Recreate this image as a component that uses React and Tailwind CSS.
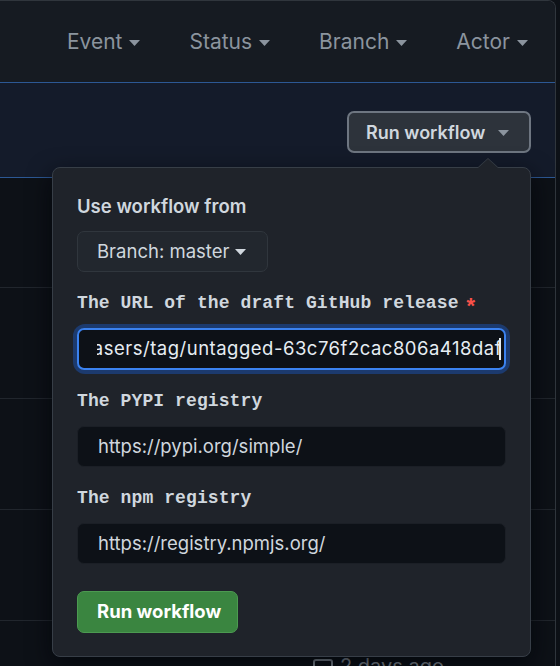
import React from 'react'

const sans = { fontFamily: 'Inter, "Liberation Sans", sans-serif' }

function Caret({ className = '' }) {
  return (
    <svg width="11" height="6" viewBox="0 0 11 6" className={className}>
      <path d="M0 0h11L5.5 6z" fill="currentColor" />
    </svg>
  )
}

function Field({ label, value, required, focused }) {
  return (
    <div>
      <div className="h-6 flex items-center text-[18px] font-bold text-[#d0d7de] leading-6 font-['Liberation_Mono',monospace] tracking-[0.1px]">
        {label}
        {required && <span className="ml-[8px] text-[#f85149] font-['Liberation_Sans',sans-serif] text-[22px] mt-[6px]">*</span>}
      </div>
      {focused ? (
        <div className="mt-[13px] rounded-[8px] ring-4 ring-[#1c3a6e]">
          <div className="h-[42px] rounded-[7px] border-2 border-[#3b82f0] bg-[#0d1117] pl-[18px] pr-[3px] flex items-center">
            <div className="flex-1 overflow-hidden flex justify-end items-center whitespace-nowrap text-[18.5px] tracking-[0.5px] text-[#e6edf3]" style={sans}>
              <span>github.com/wagtail/releasers/tag/untagged-63c76f2cac806a418daf</span>
              <span className="w-[2px] h-[22px] bg-[#e6edf3] shrink-0 -ml-[3px]" />
            </div>
          </div>
        </div>
      ) : (
        <div className="mt-[13px] h-[41px] rounded-[7px] border border-[#1b1f26] bg-[#0d1117] pl-[20px] flex items-center text-[18.5px] text-[#d0d7de]" style={sans}>
          {value}
        </div>
      )}
    </div>
  )
}

export default function App() {
  return (
    <div className="relative w-[560px] h-[666px] overflow-hidden bg-[#0d1117]" style={sans}>
      <div className="w-[556px] border-t border-r border-[#30363d] rounded-tr-[8px] overflow-hidden">
        <div className="h-[81px] bg-[#161b22] flex items-center justify-end pr-[27px] gap-[49px] text-[21px] text-[#8b949e]">
          {['Event', 'Status', 'Branch', 'Actor'].map((t) => (
            <div key={t} className="flex items-center gap-[7px]">
              <span>{t}</span>
              <Caret className="mt-[2px]" />
            </div>
          ))}
        </div>
        <div className="h-[96px] border-y border-[#2c5894] bg-[#141b2a] flex items-center justify-end pr-[24px] pt-[4px]">
          <div className="h-[42px] w-[184px] rounded-[7px] border-2 border-[#6e7681] bg-[#2d333b] flex items-center pl-[17px] gap-[13px] text-[18px] font-semibold text-[#d0d7de]">
            <span>Run workflow</span>
            <Caret className="text-[#8b949e] mt-[2px]" />
          </div>
        </div>
        <div className="h-[110px] border-b border-[#21262d]" />
        <div className="h-[111px] border-b border-[#21262d]" />
        <div className="h-[111px] border-b border-[#21262d]" />
        <div className="h-[111px] border-b border-[#21262d]" />
        <div className="h-[60px] pt-[34px] pl-[313px] flex items-start gap-[7px] text-[20px] leading-[22px] text-[#8b949e]">
          <svg width="20" height="20" viewBox="0 0 20 20" className="mt-[4px]">
            <rect x="1" y="1" width="18" height="17" rx="2" fill="none" stroke="currentColor" strokeWidth="2" />
          </svg>
          <span>2 days ago</span>
        </div>
      </div>

      {/* popover */}
      <div className="absolute left-[52px] top-[167px] w-[479px] h-[490px] rounded-[8px] border border-[#373e47] bg-[#1f232a] shadow-[0_8px_24px_rgba(1,4,9,0.75)] px-[24px] pt-[26px]">
        <div className="absolute -top-[10px] left-[424px] w-0 h-0 border-x-[11px] border-x-transparent border-b-[10px] border-b-[#373e47]" />
        <div className="absolute -top-[9px] left-[425px] w-0 h-0 border-x-[10px] border-x-transparent border-b-[9px] border-b-[#1f232a]" />
        <div className="h-6 leading-6 text-[18.5px] font-semibold text-[#d0d7de]">Use workflow from</div>
        <div className="mt-[13px] h-[41px] w-[191px] rounded-[7px] border border-[#30363d] bg-[#22272e] flex items-center pl-[19px] gap-[6px] text-[18.5px] text-[#d0d7de]">
          <span>Branch: master</span>
          <Caret className="mt-[1px]" />
        </div>
        <div className="mt-[19px] flex flex-col gap-[19px]">
          <Field label="The URL of the draft GitHub release" required focused />
          <Field label="The PYPI registry" value="https://pypi.org/simple/" />
          <Field label="The npm registry" value="https://registry.npmjs.org/" />
        </div>
        <div className="mt-[27px] h-[42px] w-[161px] rounded-[7px] border border-[#4c9a51] bg-[#3a8540] flex items-center pl-[19px] text-[18.5px] font-bold text-white">
          Run workflow
        </div>
      </div>
    </div>
  )
}
